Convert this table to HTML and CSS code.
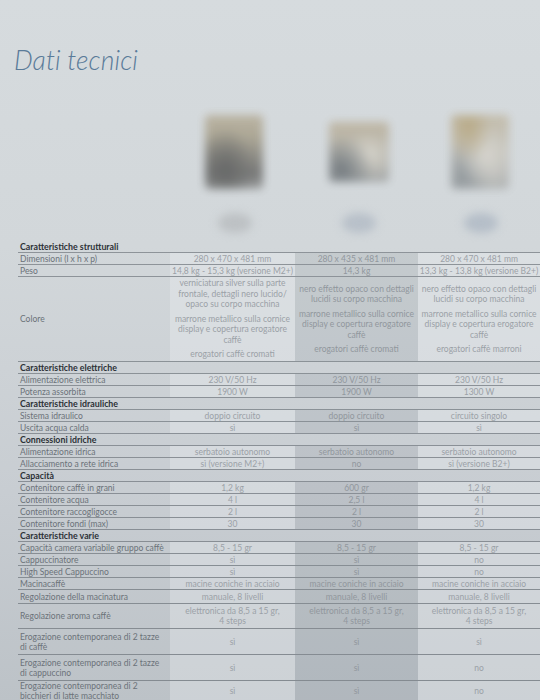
FILE: index.html
```html
<!DOCTYPE html>
<html lang="it">
<head>
<meta charset="utf-8">
<title>Dati tecnici</title>
<link rel="stylesheet" href="styles.css">
</head>
<body>
<div class="page">
  <h1 class="title">Dati tecnici</h1>

  <div class="products">
    <div class="spacer"></div>
    <div class="product p1">
      <div class="img-area"><div class="shot shot1"></div></div>
      <div class="oval oval1"></div>
    </div>
    <div class="product p2">
      <div class="img-area"><div class="shot shot2"></div></div>
      <div class="oval oval2"></div>
    </div>
    <div class="product p3">
      <div class="img-area"><div class="shot shot3"></div></div>
      <div class="oval oval3"></div>
    </div>
  </div>

  <table class="specs">
    <colgroup>
      <col class="c-label">
      <col class="c-v">
      <col class="c-v">
      <col class="c-v">
    </colgroup>
    <tbody>
      <tr class="head"><td colspan="4">Caratteristiche strutturali</td></tr>
      <tr><td>Dimensioni (l x h x p)</td><td class="v1">280 x 470 x 481 mm</td><td class="v2">280 x 435 x 481 mm</td><td class="v3">280 x 470 x 481 mm</td></tr>
      <tr><td>Peso</td><td class="v1">14,8 kg - 15,3 kg (versione M2+)</td><td class="v2">14,3 kg</td><td class="v3">13,3 kg - 13,8 kg (versione B2+)</td></tr>
      <tr class="colore">
        <td>Colore</td>
        <td class="v1 multi">
          <p>verniciatura silver sulla parte<br>frontale, dettagli nero lucido/<br>opaco su corpo macchina</p>
          <p>marrone metallico sulla cornice<br>display e copertura erogatore<br>caffè</p>
          <p>erogatori caffè cromati</p>
        </td>
        <td class="v2 multi">
          <p>nero effetto opaco con dettagli<br>lucidi su corpo macchina</p>
          <p>marrone metallico sulla cornice<br>display e copertura erogatore<br>caffè</p>
          <p>erogatori caffè cromati</p>
        </td>
        <td class="v3 multi">
          <p>nero effetto opaco con dettagli<br>lucidi su corpo macchina</p>
          <p>marrone metallico sulla cornice<br>display e copertura erogatore<br>caffè</p>
          <p>erogatori caffè marroni</p>
        </td>
      </tr>
      <tr class="head"><td colspan="4">Caratteristiche elettriche</td></tr>
      <tr><td>Alimentazione elettrica</td><td class="v1">230 V/50 Hz</td><td class="v2">230 V/50 Hz</td><td class="v3">230 V/50 Hz</td></tr>
      <tr><td>Potenza assorbita</td><td class="v1">1900 W</td><td class="v2">1900 W</td><td class="v3">1300 W</td></tr>
      <tr class="head"><td colspan="4">Caratteristiche idrauliche</td></tr>
      <tr><td>Sistema idraulico</td><td class="v1">doppio circuito</td><td class="v2">doppio circuito</td><td class="v3">circuito singolo</td></tr>
      <tr><td>Uscita acqua calda</td><td class="v1">sì</td><td class="v2">sì</td><td class="v3">sì</td></tr>
      <tr class="head"><td colspan="4">Connessioni idriche</td></tr>
      <tr><td>Alimentazione idrica</td><td class="v1">serbatoio autonomo</td><td class="v2">serbatoio autonomo</td><td class="v3">serbatoio autonomo</td></tr>
      <tr><td>Allacciamento a rete idrica</td><td class="v1">sì (versione M2+)</td><td class="v2">no</td><td class="v3">sì (versione B2+)</td></tr>
      <tr class="head"><td colspan="4">Capacità</td></tr>
      <tr><td>Contenitore caffè in grani</td><td class="v1">1,2 kg</td><td class="v2">600 gr</td><td class="v3">1,2 kg</td></tr>
      <tr><td>Contenitore acqua</td><td class="v1">4 l</td><td class="v2">2,5 l</td><td class="v3">4 l</td></tr>
      <tr><td>Contenitore raccogligocce</td><td class="v1">2 l</td><td class="v2">2 l</td><td class="v3">2 l</td></tr>
      <tr><td>Contenitore fondi (max)</td><td class="v1">30</td><td class="v2">30</td><td class="v3">30</td></tr>
      <tr class="head"><td colspan="4">Caratteristiche varie</td></tr>
      <tr><td>Capacità camera variabile gruppo caffè</td><td class="v1">8,5 - 15 gr</td><td class="v2">8,5 - 15 gr</td><td class="v3">8,5 - 15 gr</td></tr>
      <tr><td>Cappuccinatore</td><td class="v1">sì</td><td class="v2">sì</td><td class="v3">no</td></tr>
      <tr><td>High Speed Cappuccino</td><td class="v1">sì</td><td class="v2">sì</td><td class="v3">no</td></tr>
      <tr><td>Macinacaffè</td><td class="v1">macine coniche in acciaio</td><td class="v2">macine coniche in acciaio</td><td class="v3">macine coniche in acciaio</td></tr>
      <tr class="r14"><td>Regolazione della macinatura</td><td class="v1">manuale, 8 livelli</td><td class="v2">manuale, 8 livelli</td><td class="v3">manuale, 8 livelli</td></tr>
      <tr class="r25"><td>Regolazione aroma caffè</td><td class="v1">elettronica da 8,5 a 15 gr,<br>4 steps</td><td class="v2">elettronica da 8,5 a 15 gr,<br>4 steps</td><td class="v3">elettronica da 8,5 a 15 gr,<br>4 steps</td></tr>
      <tr class="r27"><td>Erogazione contemporanea di 2 tazze<br>di caffè</td><td class="v1">sì</td><td class="v2">sì</td><td class="v3">sì</td></tr>
      <tr class="r27"><td>Erogazione contemporanea di 2 tazze<br>di cappuccino</td><td class="v1">sì</td><td class="v2">sì</td><td class="v3">no</td></tr>
      <tr class="r-last"><td>Erogazione contemporanea di 2<br>bicchieri di latte macchiato</td><td class="v1">sì</td><td class="v2">sì</td><td class="v3">no</td></tr>
    </tbody>
  </table>
</div>
</body>
</html>
```

FILE: styles.css
```css
html, body {
  margin: 0;
  padding: 0;
}

body {
  width: 540px;
  min-height: 700px;
  overflow: hidden;
  font-family: Lato, "Liberation Sans", sans-serif;
  background: linear-gradient(to bottom, #d6dbde 0%, #d2d7da 35%, #c8cdd2 70%, #bcc2c7 100%);
}

.page {
  padding-top: 45px;
}

.title {
  margin: 0 0 0 14px;
  font-family: Lato, "Liberation Sans", sans-serif;
  font-style: italic;
  font-weight: 300;
  font-size: 26.5px;
  line-height: 30px;
  color: #5a7b99;
  letter-spacing: 0.1px;
}

/* products row */
.products {
  display: flex;
  margin-left: 18px;
  height: 166px;
}

.spacer {
  width: 152px;
  flex: none;
}

.product {
  flex: none;
  display: flex;
  flex-direction: column;
  align-items: center;
  padding-top: 38px;
}

.p1 { width: 125px; }
.p2 { width: 123px; }
.p3 { width: 122px; }

.img-area {
  height: 77px;
  width: 100%;
  display: flex;
  align-items: center;
  justify-content: center;
}

.shot {
  filter: blur(4px);
  border-radius: 4px;
  opacity: 0.92;
}

.shot1 {
  width: 58px;
  height: 74px;
  margin-left: 2px;
  background:
    radial-gradient(ellipse at 35% 75%, #5f605f 0%, rgba(95,96,95,0) 55%),
    linear-gradient(to bottom, #b9b19e 0%, #a9a390 30%, #8a8880 55%, #707170 80%, #9a9c9c 100%);
}

.shot2 {
  width: 60px;
  height: 60px;
  margin-left: 4px;
  background:
    radial-gradient(ellipse at 20% 80%, #6f767b 0%, rgba(111,118,123,0) 50%),
    radial-gradient(ellipse at 65% 55%, #d8d5cb 0%, rgba(216,213,203,0) 50%),
    linear-gradient(to bottom, #bdb4a0 0%, #b8b4a8 40%, #a5a8a8 100%);
}

.shot3 {
  width: 58px;
  height: 74px;
  margin-left: 2px;
  background:
    radial-gradient(ellipse at 30% 15%, #b7a781 0%, rgba(183,167,129,0) 40%),
    radial-gradient(ellipse at 60% 55%, #d6d4cd 0%, rgba(214,212,205,0) 55%),
    radial-gradient(ellipse at 20% 85%, #8f969a 0%, rgba(143,150,154,0) 45%),
    linear-gradient(to bottom, #c2bba8 0%, #c4c2ba 50%, #b0b3b3 100%);
}

.oval {
  margin-top: 23px;
  width: 34px;
  height: 20px;
  border-radius: 50%;
  filter: blur(4px);
}

.oval1 { background: #bdc1c4; margin-left: 4px; }
.oval2 { background: #b8c0c9; margin-left: 4px; }
.oval3 { background: #b5bec8; margin-left: 4px; }

/* specs table */
.specs {
  margin-left: 18px;
  width: 522px;
  border-collapse: collapse;
  table-layout: fixed;
  font-size: 8.5px;
}

.c-label { width: 152px; }

.specs col:nth-child(2) { width: 125px; }
.specs col:nth-child(3) { width: 123px; }
.specs col:nth-child(4) { width: 122px; }

.specs td {
  height: 11px;
  padding: 0 2px;
  line-height: 10px;
  border-bottom: 1px solid rgba(85, 93, 101, 0.55);
  color: #6b7279;
  vertical-align: middle;
  white-space: nowrap;
  overflow: hidden;
}

.specs tr.head td {
  font-weight: 700;
  color: #2c3137;
  font-size: 8.8px;
}

.specs td.v1,
.specs td.v2,
.specs td.v3 {
  text-align: center;
  color: #9ba1a7;
  padding: 0;
}

.specs td.v1,
.specs td.v3 {
  background: rgba(240, 243, 245, 0.32);
}

.specs td.v2 {
  background: rgba(40, 55, 70, 0.075);
  color: #91979d;
}

.specs td.multi p {
  margin: 0 0 4px;
  line-height: 10.5px;
}

.specs td.multi p:last-child {
  margin-bottom: 0;
}

.specs tr.colore td {
  height: 84px;
}

.specs tr.r14 td { height: 13px; }
.specs tr.r25 td { height: 24px; }
.specs tr.r27 td { height: 25px; }
.specs tr.r-last td { height: 20px; }
```
